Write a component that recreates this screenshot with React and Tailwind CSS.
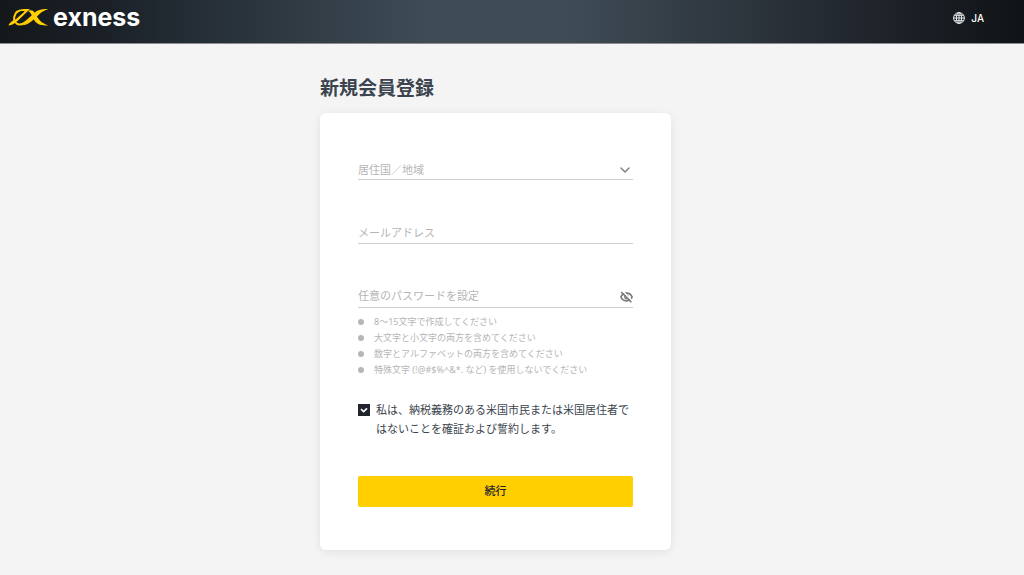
import React, { useState } from "react";
import { ChevronDown } from "lucide-react";

const passwordRules = [
  "8〜15文字で作成してください",
  "大文字と小文字の両方を含めてください",
  "数字とアルファベットの両方を含めてください",
  "特殊文字 (!@#$%^&*. など) を使用しないでください",
];

const Logo = () => (
  <a href="#" className="flex items-center gap-1 text-white">
    <svg width="41" height="18" viewBox="0 0 41 18" fill="none" aria-hidden="true">
      <path d="M0.3 17.4C2.5 13.8 4.5 12.6 7.5 11.6L16.6 3.4C14.8 2.6 12.5 2.8 10.2 4.4H6.8C9.4 1.6 13.5 1 17.2 1.1H22L9.8 12.8C6.8 15.6 4.6 17.2 0.3 17.4Z" fill="#ffcf01" />
      <path d="M9.4 3.6C5.8 6.6 5.2 11.4 7.2 14C9.2 17.2 13.6 17 16.8 14.6C21 11.4 26 6 30.6 3.1" stroke="#ffcf01" strokeWidth="2" />
      <path d="M13.4 17.2C18.4 16 24.3 8 28.8 3.8C31.4 1.5 34.5 1.1 40.4 1.1C36.4 2.4 34 3.8 31 6.4C26.2 10.6 20.5 17.6 13.4 17.2Z" fill="#ffcf01" />
      <path d="M20 2.8C24 1 26.4 3.4 27.9 6.6C30 11.2 33.2 15.2 40.4 17.4C33 18 28.6 16.6 25.8 11.6C24.2 8.6 23.4 5 20 2.8Z" fill="#ffcf01" />
    </svg>
    <span className="font-['Inter'] text-[25px] leading-8 font-bold">exness</span>
  </a>
);

const GlobeIcon = () => (
  <svg width="12" height="12" viewBox="0 0 12 12" fill="none" stroke="#e8eaeb" strokeWidth="1" aria-hidden="true">
    <circle cx="6" cy="6" r="5.4" />
    <ellipse cx="6" cy="6" rx="2.6" ry="5.4" />
    <path d="M6 0.6V11.4M0.6 6H11.4M1.4 3.3H10.6M1.4 8.7H10.6" />
  </svg>
);

const HiddenEyeIcon = () => (
  <svg width="13" height="12" viewBox="0 0 13 12" fill="none" aria-hidden="true">
    <path d="M0.9 6C2 3.4 4.2 2.2 6.5 2.2C8.8 2.2 11 3.4 12.1 6C11 8.6 8.8 9.8 6.5 9.8C4.2 9.8 2 8.6 0.9 6Z" stroke="#77797c" strokeWidth="1.7" />
    <circle cx="6.5" cy="6" r="1.8" stroke="#77797c" strokeWidth="1.2" />
    <path d="M2.6 0.2L12.6 10" stroke="#fff" strokeWidth="1.4" />
    <path d="M1.2 1L11.4 11.2" stroke="#77797c" strokeWidth="1.6" />
  </svg>
);

export default function App() {
  const [country, setCountry] = useState("");
  const [showPassword, setShowPassword] = useState(false);
  const [agreed, setAgreed] = useState(true);

  return (
    <div className="min-h-screen bg-[#f4f4f4] font-['Noto_Sans','Noto_Sans_CJK_JP',sans-serif] text-[11px] text-[#3b444e]">
      {/* Header */}
      <header className="flex items-start justify-between border-b border-[#8f8d94] bg-[linear-gradient(90deg,#14181b,#1b2027_10%,#232c34_18%,#3f4c56_42%,#3f4c56_55%,#1e2229_87%,#101416)] pt-px pr-10 pb-2.5 pl-2">
        <Logo />
        <button className="flex items-center gap-1.5 pt-2 text-[10px] leading-4.5 text-white">
          <GlobeIcon />
          <span className="font-['Inter'] font-medium">JA</span>
        </button>
      </header>

      {/* Registration form */}
      <main className="pt-7 pr-[33px] pb-6">
        <div className="mx-auto max-w-[351px]">
          <h1 className="text-[19px] leading-8 font-bold">新規会員登録</h1>

          <form
            onSubmit={(e) => e.preventDefault()}
            className="mt-[9px] rounded-md bg-white px-[38px] pt-[47px] pb-[43px] shadow-[0_2px_10px_rgba(0,0,0,0.08)]"
          >
            <div className="relative">
              <select
                aria-label="居住国／地域"
                value={country}
                onChange={(e) => setCountry(e.target.value)}
                className="block h-5 w-full appearance-none border-b border-[#cfcfcf] bg-transparent pt-0.5 text-[#b5b5b5] outline-none"
              >
                <option value="">居住国／地域</option>
                <option value="jp">日本</option>
              </select>
              <ChevronDown size={16} className="pointer-events-none absolute top-0.5 right-0 text-[#77797c]" />
            </div>

            <input
              type="email"
              aria-label="メールアドレス"
              placeholder="メールアドレス"
              className="mt-11 block h-5 w-full border-b border-[#cfcfcf] pb-0.5 outline-none placeholder:text-[#b5b5b5]"
            />

            <div className="mt-11 flex h-5 items-center border-b border-[#cfcfcf] pb-0.5">
              <input
                type={showPassword ? "text" : "password"}
                aria-label="任意のパスワードを設定"
                placeholder="任意のパスワードを設定"
                className="min-w-0 flex-1 outline-none placeholder:text-[#b5b5b5]"
              />
              <button type="button" aria-label="パスワードを表示" onClick={() => setShowPassword(!showPassword)}>
                <HiddenEyeIcon />
              </button>
            </div>

            <ul className="mt-1.5 text-[9px] leading-4 text-[#b5b5b5]">
              {passwordRules.map((rule) => (
                <li key={rule} className="flex items-center gap-2.5">
                  <span className="size-1.5 shrink-0 rounded-full bg-[#b5b5b5]" />
                  {rule}
                </li>
              ))}
            </ul>

            <label className="mt-[22px] flex items-start gap-1.5 leading-[19px]">
              <span className="relative mt-1 size-3 shrink-0">
                <input
                  type="checkbox"
                  checked={agreed}
                  onChange={(e) => setAgreed(e.target.checked)}
                  className="block size-3 appearance-none border border-[#22262c] checked:bg-[#22262c]"
                />
                {agreed && (
                  <svg viewBox="0 0 12 12" className="pointer-events-none absolute inset-0" fill="none">
                    <path d="M3 5.2L5.6 7.6L9 4.4" stroke="#fff" strokeWidth="1.6" />
                  </svg>
                )}
              </span>
              <span>私は、納税義務のある米国市民または米国居住者ではないことを確証および誓約します。</span>
            </label>

            <button
              type="submit"
              className="mt-[38px] block h-[31px] w-full rounded-xs bg-[#ffcf01] font-medium text-[#22262c]"
            >
              続行
            </button>
          </form>
        </div>
      </main>
    </div>
  );
}
